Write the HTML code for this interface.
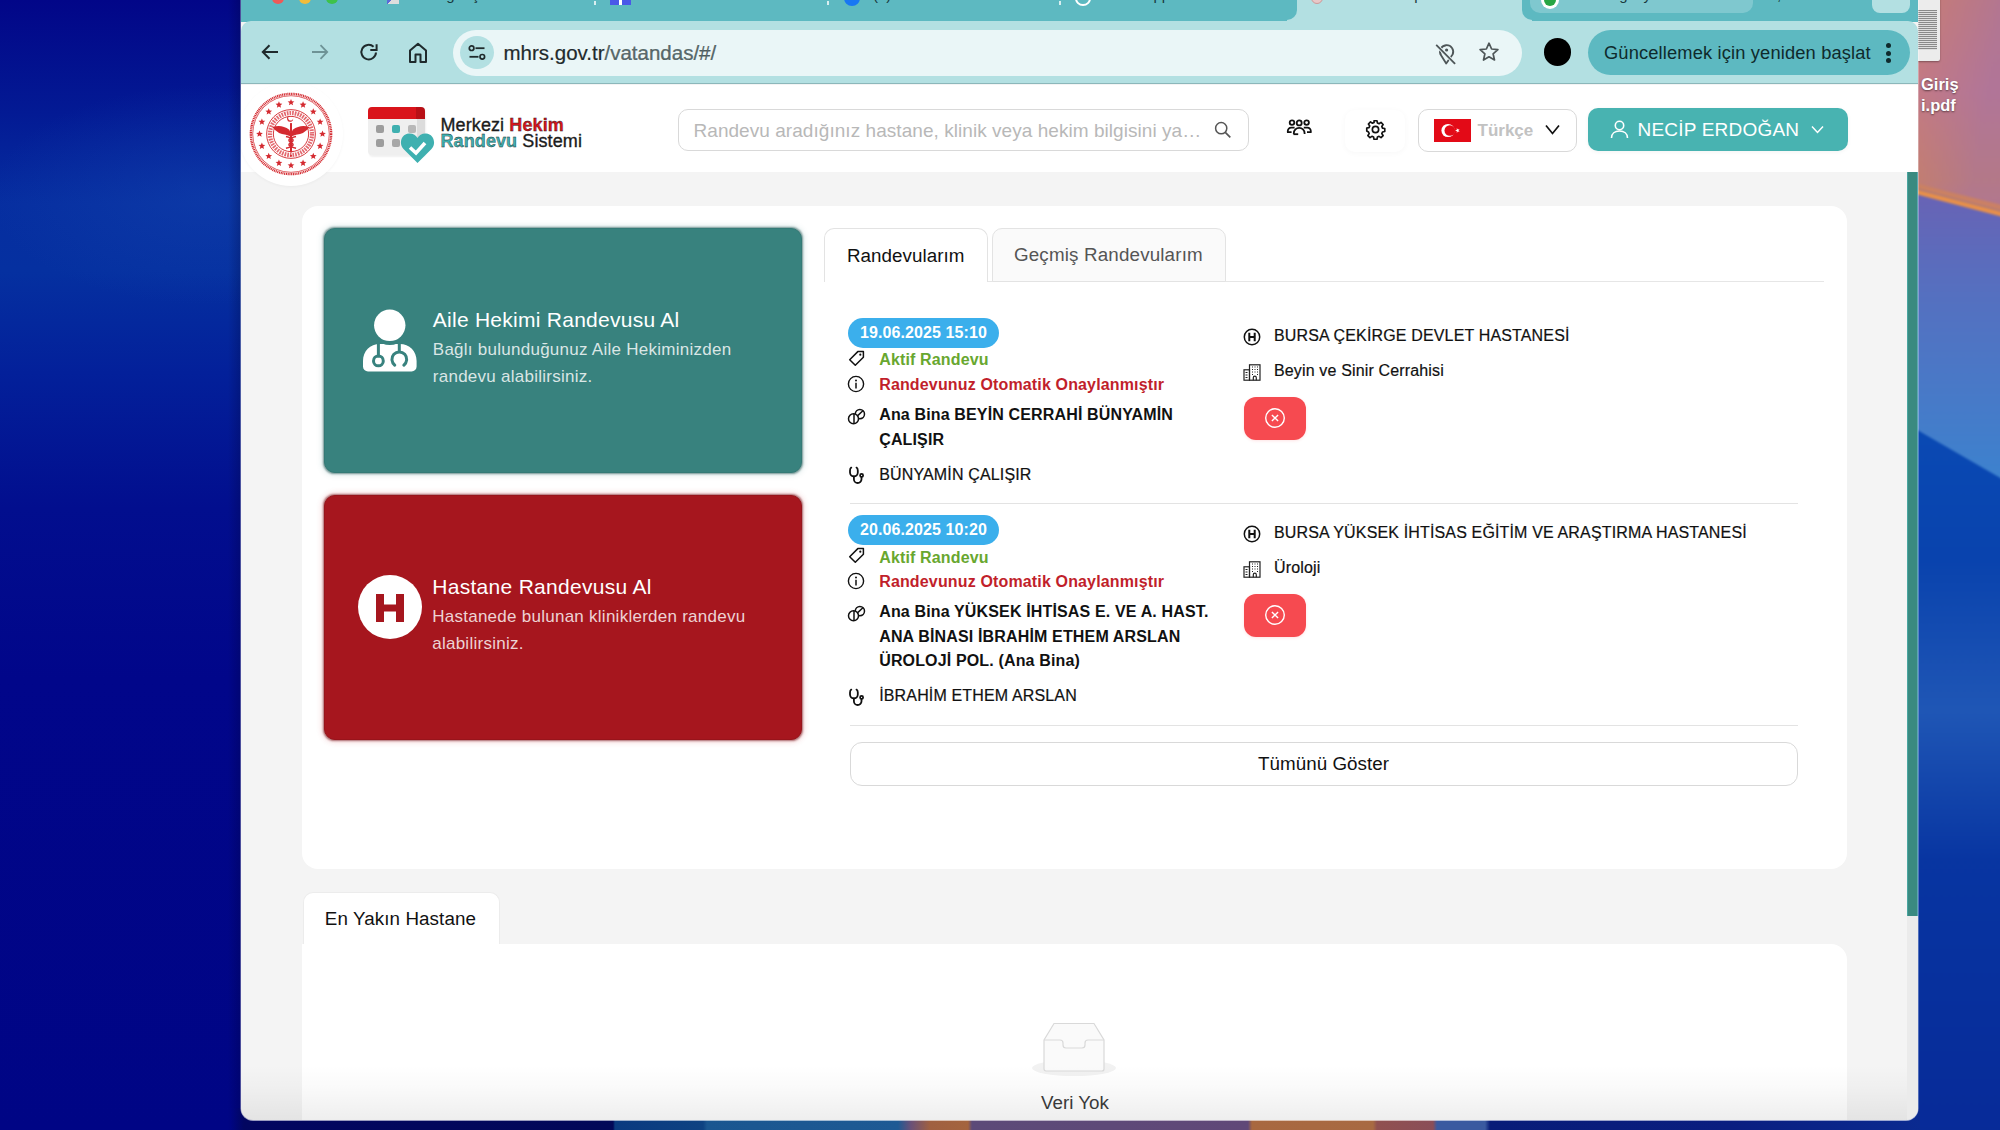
<!DOCTYPE html>
<html><head><meta charset="utf-8">
<style>
*{box-sizing:border-box;margin:0;padding:0}
html,body{width:2000px;height:1130px;overflow:hidden;font-family:"Liberation Sans",sans-serif;}
body{position:relative;background:#00008a;}
.abs{position:absolute}
#deskL{left:0;top:0;width:260px;height:1130px;background:radial-gradient(ellipse 220px 110px at 210px 195px,rgba(20,70,175,0.45),rgba(20,70,175,0) 100%),linear-gradient(180deg,#020688 0%,#031a94 10%,#062ea0 18%,#0530a0 24%,#03209a 33%,#020e8e 45%,#01068a 60%,#000585 100%);}
#deskR{left:1900px;top:0;width:100px;height:1130px;background:linear-gradient(170deg,#c97a73 0%,#c07888 12%,#d08050 17%,#7a62a8 21%,#5a68b4 35%,#1c44b0 42%,#0c3aa8 60%,#0a2c98 100%);}
#deskB{left:230px;top:1108px;width:1690px;height:22px;background:linear-gradient(90deg,#000585 0px,#020660 14px,#020858 383px,#0a3a80 385px,#0e4282 473px,#1a5690 477px,#1e5a94 668px,#6a5078 681px,#a06040 700px,#a4643e 738px,#5c4a78 742px,#604878 1018px,#a86840 1022px,#a86a42 1143px,#905050 1147px,#8a4e58 1203px,#3a5aa0 1207px,#3a5aa0 1255px,#081c78 1260px,#0a1e80 1500px,#0a2a90 1690px);}
#win{left:241px;top:0;width:1677px;height:1120px;border-radius:0 0 12px 12px;overflow:hidden;background:#f4f4f4;box-shadow:0 0.5px 0 0.5px rgba(255,255,255,0.6)}
#tabstrip{left:0;top:0;width:1677px;height:22px;background:#5db9c1;}
#toolbar{left:0;top:21px;width:1677px;height:63px;background:#b3e0e2;border-radius:10px 10px 0 0;border-bottom:1.5px solid #8cb7ba;}
#header{left:0;top:85px;width:1677px;height:87px;background:#fff;}
.card{background:#fff;border-radius:16px;}
.bigcard{border-radius:11px;border:1px solid;}
.tab{border:1px solid #e3e3e3;border-radius:10px 10px 0 0;}
.pill{height:30px;width:150.8px;border-radius:15px;background:#3bafec;color:#fff;font-weight:bold;font-size:16px;line-height:30px;padding-left:12px;letter-spacing:0.1px;white-space:nowrap}
.t16b{font-size:16px;font-weight:bold;white-space:nowrap;letter-spacing:0.15px}
.t16{font-size:16px;white-space:nowrap;letter-spacing:0.15px;-webkit-text-stroke:0.2px #111}
.cancel{width:62.3px;height:43px;border-radius:12px;background:#f64a50;box-shadow:0 1px 3px rgba(246,74,80,0.15)}
</style></head>
<body>
<div id="deskL" class="abs"></div><div class="abs" style="left:228px;top:0;width:14px;height:1130px;background:linear-gradient(90deg,rgba(0,0,40,0),rgba(0,0,40,0.25))"></div>
<svg id="deskR2" class="abs" style="left:1900px;top:-20px;filter:blur(1px)" width="130" height="1170" viewBox="0 -20 130 1170">
  <defs>
    <linearGradient id="gTop" x1="0" y1="0" x2="0" y2="1"><stop offset="0" stop-color="#c77c74"/><stop offset="0.45" stop-color="#c47a84"/><stop offset="0.8" stop-color="#c88068"/><stop offset="1" stop-color="#c07a80"/></linearGradient>
    <linearGradient id="gMid" x1="0" y1="0" x2="0" y2="1"><stop offset="0" stop-color="#6a62b4"/><stop offset="0.35" stop-color="#5570c0"/><stop offset="1" stop-color="#3a84d0"/></linearGradient>
    <linearGradient id="gLow" x1="0" y1="0" x2="0" y2="1"><stop offset="0" stop-color="#0a4ab4"/><stop offset="0.5" stop-color="#0838a4"/><stop offset="1" stop-color="#072a98"/></linearGradient>
  </defs>
  <rect x="0" y="-20" width="130" height="250" fill="url(#gTop)"/>
  <polygon points="0,184 130,218 130,500 0,420" fill="url(#gMid)"/>
  <polygon points="0,185 130,219 130,224 0,190" fill="#e8904a"/>
  <polygon points="0,178 130,212 130,220 0,186" fill="#d08458" opacity="0.5"/>
  <polygon points="0,420 130,495 130,1150 0,1150" fill="url(#gLow)"/>
  <linearGradient id="gH" x1="0" y1="0" x2="1" y2="0.3"><stop offset="0.2" stop-color="#9a70b0" stop-opacity="0"/><stop offset="0.75" stop-color="#9a70b0" stop-opacity="0.45"/></linearGradient>
  <polygon points="0,-20 130,-20 130,212 0,180" fill="url(#gH)"/>
  <linearGradient id="gV2" x1="0" y1="0" x2="0" y2="1"><stop offset="0" stop-color="#4a88d0" stop-opacity="0"/><stop offset="0.5" stop-color="#4a88d0" stop-opacity="0.35"/><stop offset="1" stop-color="#4a88d0" stop-opacity="0"/></linearGradient>
  <rect x="0" y="560" width="130" height="300" fill="url(#gV2)"/>
</svg>
<div id="deskB" class="abs"></div>
<!-- desktop file icon -->
<div class="abs" style="left:1914px;top:-4px;width:25.5px;height:64.5px;background:#ececec;border-radius:2px;box-shadow:0 1px 2px rgba(0,0,0,0.35)"><div style="margin:14px 3px 0 3px;height:40px;background:repeating-linear-gradient(180deg,#8a8a8a 0 1px,#dedede 1px 2px)"></div></div>
<div class="abs" style="left:1921px;top:74px;font-size:16.5px;font-weight:bold;color:#fff;line-height:21px;text-shadow:0 1px 2px rgba(0,0,0,0.5);white-space:nowrap">Giriş<br>i.pdf</div>
<div id="win" class="abs">
  <div id="tabstrip" class="abs"></div>
  <!-- tab strip items (cut off) -->
  <div class="abs" style="left:31px;top:-8px;width:12px;height:12px;border-radius:50%;background:#ee5a58"></div>
  <div class="abs" style="left:58px;top:-8px;width:12px;height:12px;border-radius:50%;background:#f2bc3a"></div>
  <div class="abs" style="left:85px;top:-8px;width:12px;height:12px;border-radius:50%;background:#3ec24a"></div>
  <div class="abs" style="left:146px;top:-6px;width:12px;height:10px;background:linear-gradient(135deg,#5a6ad8 50%,#ddd 50%)"></div>
  <div class="abs" style="left:197px;top:-14px;font-size:15px;color:#1a3a3e">ogle Ş</div>
  <div class="abs" style="left:353px;top:1px;width:2px;height:4px;background:#d8eef0"></div>
  <div class="abs" style="left:369px;top:-8px;width:21px;height:13px;background:#4a58e8"><div style="position:absolute;left:9px;top:0;width:3px;height:13px;background:#fff"></div></div>
  <div class="abs" style="left:586px;top:1px;width:2px;height:4px;background:#d8eef0"></div>
  <div class="abs" style="left:603px;top:-10px;width:16px;height:16px;border-radius:50%;background:#1877f2"></div>
  <div class="abs" style="left:632px;top:-14px;font-size:15px;color:#1a3a3e">(7)</div>
  <div class="abs" style="left:818px;top:1px;width:2px;height:4px;background:#d8eef0"></div>
  <div class="abs" style="left:834px;top:-9px;width:16px;height:15px;border-radius:50%;border:2.5px solid #fff"></div>
  <div class="abs" style="left:860px;top:-14px;font-size:15px;color:#1a3a3e">WhatsApp</div>
  <!-- active tab -->
  <div class="abs" style="left:1056px;top:0;width:225px;height:22px;background:#b3e0e2"></div>
  <div class="abs" style="left:1046px;top:0;width:10px;height:22px;background:#b3e0e2"><div style="width:10px;height:20px;background:#5db9c1;border-radius:0 0 10px 0"></div></div>
  <div class="abs" style="left:1281px;top:0;width:10px;height:22px;background:#b3e0e2"><div style="width:10px;height:20px;background:#5db9c1;border-radius:0 0 0 10px"></div></div>
  <div class="abs" style="left:1070px;top:-8px;width:12px;height:12px;border-radius:50%;background:#e8c8c8;border:1px solid #c99"></div>
  <div class="abs" style="left:1170px;top:-14px;font-size:15px;color:#1a3a3e">ip</div>
  <!-- tab group -->
  <div class="abs" style="left:1289px;top:0;width:223px;height:13px;background:#7fc8cf;border-radius:0 0 10px 10px"></div>
  <div class="abs" style="left:1300px;top:-9px;width:18px;height:18px;border-radius:50%;background:#fff"><div style="position:absolute;left:3px;top:3px;width:12px;height:12px;border-radius:50%;background:#27a544"></div></div>
  <div class="abs" style="left:1370px;top:-14px;font-size:15px;color:#1a3a3e">ogle  y</div>
  <div class="abs" style="left:1536px;top:-14px;font-size:15px;color:#1a3a3e">,</div>
  <div class="abs" style="left:1631px;top:0;width:38px;height:13px;background:#b3e0e2;border-radius:0 0 8px 8px"></div>
  <div id="toolbar" class="abs"></div>
  <!-- toolbar icons -->
  <svg class="abs" style="left:19px;top:42px" width="20" height="20" viewBox="0 0 20 20"><path d="M18 10H3M9.5 3.2L2.8 10l6.7 6.8" fill="none" stroke="#1f2a2c" stroke-width="2"/></svg>
  <svg class="abs" style="left:69px;top:42px" width="20" height="20" viewBox="0 0 20 20"><path d="M2 10h15M10.5 3.2L17.2 10l-6.7 6.8" fill="none" stroke="#6e9396" stroke-width="1.8"/></svg>
  <svg class="abs" style="left:118px;top:42px" width="20" height="20" viewBox="0 0 20 20"><path d="M16.99 10.48A7.3 7.3 0 1 1 14.58 4.68" fill="none" stroke="#1f2a2c" stroke-width="2"/><path d="M11.3 8.1H17.6V2.2" fill="none" stroke="#1f2a2c" stroke-width="2"/></svg>
  <svg class="abs" style="left:167px;top:42px" width="20" height="22" viewBox="0 0 20 22"><path d="M2 20V8.6L10 1.8l8 6.8V20h-5.5v-7.5h-5V20z" fill="none" stroke="#1f2a2c" stroke-width="2" stroke-linejoin="round"/></svg>
  <!-- address bar -->
  <div class="abs" style="left:212px;top:29.5px;width:1069px;height:46px;border-radius:23px;background:#eaf6f7"></div>
  <div class="abs" style="left:219px;top:36px;width:34px;height:33px;border-radius:50%;background:#b3e0e2"></div>
  <svg class="abs" style="left:226px;top:43px" width="20" height="20" viewBox="0 0 20 20"><circle cx="4.6" cy="5.2" r="2.3" fill="none" stroke="#1f2a2c" stroke-width="1.7"/><path d="M8.5 5.2h9" stroke="#1f2a2c" stroke-width="1.8"/><circle cx="15.3" cy="13.8" r="2.3" fill="none" stroke="#1f2a2c" stroke-width="1.7"/><path d="M2.5 13.8h9" stroke="#1f2a2c" stroke-width="1.8"/></svg>
  <div class="abs" style="left:262.5px;top:41px;font-size:20.5px;color:#1f2a2c;letter-spacing:0px;white-space:nowrap;-webkit-text-stroke:0.2px #1f2a2c">mhrs.gov.tr<span style="color:#5a6c6e">/vatandas/#/</span></div>
  <!-- eye-off/location icon -->
  <svg class="abs" style="left:1193px;top:41px" width="24" height="24" viewBox="0 0 24 24"><path d="M7.2 14.6A6.6 6.6 0 1 1 18.6 13.6L12.2 22.6L7.2 14.6" fill="none" stroke="#4e5658" stroke-width="1.8" stroke-linejoin="round"/><circle cx="12.6" cy="9" r="1.6" fill="#4e5658"/><path d="M2.2 3.9L21.1 22.8" stroke="#eaf6f7" stroke-width="3.5"/><path d="M2.2 3.9L21.1 22.8" stroke="#4e5658" stroke-width="1.8"/></svg>
  <svg class="abs" style="left:1237px;top:41px" width="22" height="22" viewBox="0 0 22 22"><path d="M11 2.2l2.6 5.8 6.3.6-4.8 4.2 1.4 6.2L11 15.8 5.5 19l1.4-6.2-4.8-4.2 6.3-.6z" fill="none" stroke="#4e5658" stroke-width="1.7" stroke-linejoin="round"/></svg>
  <!-- profile dot -->
  <div class="abs" style="left:1302.5px;top:38px;width:27.5px;height:27.5px;border-radius:50%;background:#000"></div>
  <!-- update pill -->
  <div class="abs" style="left:1347px;top:29.5px;width:322px;height:45.5px;border-radius:23px;background:#5db9c1"></div>
  <div class="abs" style="left:1363px;top:42px;font-size:18.3px;color:#0f2a2c;white-space:nowrap;letter-spacing:0.15px">Güncellemek için yeniden başlat</div>
  <div class="abs" style="left:1645px;top:43px;width:5px;height:5px;border-radius:50%;background:#0f2a2c"></div>
  <div class="abs" style="left:1645px;top:50.5px;width:5px;height:5px;border-radius:50%;background:#0f2a2c"></div>
  <div class="abs" style="left:1645px;top:58px;width:5px;height:5px;border-radius:50%;background:#0f2a2c"></div>
  <div id="header" class="abs"></div>
  <!-- ministry logo -->
  <div class="abs" style="left:-10px;top:85px;width:130px;height:110px;overflow:hidden"><div class="abs" style="left:8px;top:-3px;width:104px;height:104px;border-radius:50%;background:#fff;box-shadow:0 1px 3px rgba(0,0,0,0.04)"></div></div>
  <svg class="abs" style="left:8px;top:92px" width="84" height="84" viewBox="0 0 100 100">
    <circle cx="50" cy="50" r="47.8" fill="#fff" stroke="#d42a30" stroke-width="2.8" stroke-dasharray="1.3 0.8"/>
    <circle cx="50" cy="50" r="45.6" fill="none" stroke="#d42a30" stroke-width="0.9"/>
    <g fill="#d42a30"><polygon points="50.00,8.30 51.11,10.97 53.99,11.20 51.80,13.08 52.47,15.90 50.00,14.39 47.53,15.90 48.20,13.08 46.01,11.20 48.89,10.97"/><polygon points="64.35,11.15 65.46,13.83 68.35,14.06 66.15,15.94 66.82,18.75 64.35,17.24 61.88,18.75 62.55,15.94 60.36,14.06 63.24,13.83"/><polygon points="76.52,19.28 77.63,21.95 80.51,22.19 78.31,24.07 78.99,26.88 76.52,25.37 74.05,26.88 74.72,24.07 72.52,22.19 75.41,21.95"/><polygon points="84.65,31.45 85.76,34.12 88.64,34.35 86.44,36.23 87.11,39.05 84.65,37.54 82.18,39.05 82.85,36.23 80.65,34.35 83.53,34.12"/><polygon points="87.50,45.80 88.61,48.47 91.49,48.70 89.30,50.58 89.97,53.40 87.50,51.89 85.03,53.40 85.70,50.58 83.51,48.70 86.39,48.47"/><polygon points="84.65,60.15 85.76,62.82 88.64,63.05 86.44,64.93 87.11,67.75 84.65,66.24 82.18,67.75 82.85,64.93 80.65,63.05 83.53,62.82"/><polygon points="76.52,72.32 77.63,74.99 80.51,75.22 78.31,77.10 78.99,79.91 76.52,78.41 74.05,79.91 74.72,77.10 72.52,75.22 75.41,74.99"/><polygon points="64.35,80.45 65.46,83.12 68.35,83.35 66.15,85.23 66.82,88.04 64.35,86.54 61.88,88.04 62.55,85.23 60.36,83.35 63.24,83.12"/><polygon points="50.00,83.30 51.11,85.97 53.99,86.20 51.80,88.08 52.47,90.90 50.00,89.39 47.53,90.90 48.20,88.08 46.01,86.20 48.89,85.97"/><polygon points="35.65,80.45 36.76,83.12 39.64,83.35 37.45,85.23 38.12,88.04 35.65,86.54 33.18,88.04 33.85,85.23 31.65,83.35 34.54,83.12"/><polygon points="23.48,72.32 24.59,74.99 27.48,75.22 25.28,77.10 25.95,79.91 23.48,78.41 21.01,79.91 21.69,77.10 19.49,75.22 22.37,74.99"/><polygon points="15.35,60.15 16.47,62.82 19.35,63.05 17.15,64.93 17.82,67.75 15.35,66.24 12.89,67.75 13.56,64.93 11.36,63.05 14.24,62.82"/><polygon points="12.50,45.80 13.61,48.47 16.49,48.70 14.30,50.58 14.97,53.40 12.50,51.89 10.03,53.40 10.70,50.58 8.51,48.70 11.39,48.47"/><polygon points="15.35,31.45 16.47,34.12 19.35,34.35 17.15,36.23 17.82,39.05 15.35,37.54 12.89,39.05 13.56,36.23 11.36,34.35 14.24,34.12"/><polygon points="23.48,19.28 24.59,21.95 27.48,22.19 25.28,24.07 25.95,26.88 23.48,25.37 21.01,26.88 21.69,24.07 19.49,22.19 22.37,21.95"/><polygon points="35.65,11.15 36.76,13.83 39.64,14.06 37.45,15.94 38.12,18.75 35.65,17.24 33.18,18.75 33.85,15.94 31.65,14.06 34.54,13.83"/></g>
    <circle cx="50" cy="50" r="29" fill="none" stroke="#d42a30" stroke-width="1.1"/>
    <circle cx="50" cy="50" r="25" fill="none" stroke="#e36a70" stroke-width="5" stroke-dasharray="2 1.2"/>
    <circle cx="50" cy="50" r="21" fill="none" stroke="#d42a30" stroke-width="1.1"/>
    <path d="M52.5 31.5a3.6 3.6 0 1 1-4.2-3.2a3 3 0 1 0 4.2 3.2z" fill="#d42a30"/>
    <path d="M28 42 Q38 38 48 45 L50 50 L52 45 Q62 38 72 42 Q66 50 56 51 L50 53 L44 51 Q34 50 28 42z" fill="#d42a30"/>
    <path d="M50 37 L50 72" stroke="#d42a30" stroke-width="2.4"/>
    <path d="M44 53 Q57 56 50 60 Q43 64 56 67 M56 53 Q43 56 50 60 Q57 64 44 67" stroke="#d42a30" stroke-width="1.8" fill="none"/>
    <circle cx="50" cy="76" r="1.2" fill="#d42a30"/>
  </svg>
  <!-- MHRS logo -->
  <div class="abs" style="left:126.5px;top:107px;width:57.5px;height:48px;border-radius:4px;background:#efefef;box-shadow:1px 2px 2px rgba(0,0,0,0.06)"></div>
  <div class="abs" style="left:126.5px;top:107px;width:57.5px;height:12px;border-radius:4px 4px 0 0;background:linear-gradient(90deg,#d9141b 85%,#b81016 85%)"></div>
  <div class="abs" style="left:176px;top:119px;width:8px;height:20px;background:#dcdcdc"></div>
  <div class="abs" style="left:135px;top:125px;width:8px;height:8px;border-radius:2px;background:#9d9d9d"></div>
  <div class="abs" style="left:151px;top:125px;width:8px;height:8px;border-radius:2px;background:#3fb0b0"></div>
  <div class="abs" style="left:167px;top:125px;width:8px;height:8px;border-radius:2px;background:#b8b8b8"></div>
  <div class="abs" style="left:135px;top:139px;width:8px;height:8px;border-radius:2px;background:#9d9d9d"></div>
  <div class="abs" style="left:151px;top:139px;width:8px;height:8px;border-radius:2px;background:#a8a8a8"></div>
  <svg class="abs" style="left:159px;top:131px" width="35" height="33" viewBox="0 0 35 33"><path d="M17.5 32 L3.5 18 C-1.5 13 1 3 9 2.5 C13 2.3 16 4.5 17.5 7 C19 4.5 22 2.3 26 2.5 C34 3 36.5 13 31.5 18z" fill="#3fb0b0"/><path d="M10 16.5l6 5.5 9-10" fill="none" stroke="#fff" stroke-width="3.6"/></svg>
  <div class="abs" style="left:199.5px;top:115px;font-size:18px;line-height:20px;color:#1c1c1c;white-space:nowrap;letter-spacing:0.1px;-webkit-text-stroke:0.35px #1c1c1c">Merkezi <b style="color:#d9141b">Hekim</b></div>
  <div class="abs" style="left:199.5px;top:130.5px;font-size:18px;line-height:20px;color:#1c1c1c;white-space:nowrap;letter-spacing:0.1px;-webkit-text-stroke:0.35px #1c1c1c"><b style="color:#3fb0b0">Randevu</b> Sistemi</div>
  <!-- search -->
  <div class="abs" style="left:436.5px;top:108.5px;width:571px;height:42.5px;border-radius:10px;border:1px solid #d9d9d9;background:#fff"></div>
  <div class="abs" style="left:452.5px;top:119.7px;font-size:19px;color:#b8b8b8;white-space:nowrap;letter-spacing:0.05px">Randevu aradığınız hastane, klinik veya hekim bilgisini ya…</div>
  <svg class="abs" style="left:973px;top:121px" width="18" height="18" viewBox="0 0 18 18"><circle cx="7.2" cy="7.2" r="5.6" fill="none" stroke="#555" stroke-width="1.5"/><path d="M11.3 11.3l5 5" stroke="#555" stroke-width="1.7"/></svg>
  <!-- group icon -->
  <svg class="abs" style="left:1045px;top:118px" width="27" height="18" viewBox="0 0 27 18"><g fill="none" stroke="#111" stroke-width="1.8" stroke-linejoin="round"><circle cx="6" cy="4.6" r="2.3"/><circle cx="13.2" cy="4.9" r="2.5"/><circle cx="20.6" cy="4.6" r="2.3"/><path d="M8.6 9.6H5.2A3.4 3.4 0 0 0 1.8 13V14.2H5.6"/><path d="M17.8 9.6H21.4A3.4 3.4 0 0 1 24.8 13V14.2H21"/><path d="M7.8 16V15.2A5.4 5.4 0 0 1 18.6 15.2V16" /><path d="M7.4 16.2H12.2"/></g></svg>
  <!-- gear -->
  <div class="abs" style="left:1104px;top:110px;width:60px;height:42px;border-radius:10px;box-shadow:0 1px 6px rgba(0,0,0,0.035)"></div>
  <svg class="abs" style="left:1124px;top:119px" width="21" height="21" viewBox="0 0 24 24"><path d="M10.3 2h3.4l.5 2.6 1.9.8 2.2-1.5 2.4 2.4-1.5 2.2.8 1.9 2.6.5v3.4l-2.6.5-.8 1.9 1.5 2.2-2.4 2.4-2.2-1.5-1.9.8-.5 2.6h-3.4l-.5-2.6-1.9-.8-2.2 1.5-2.4-2.4 1.5-2.2-.8-1.9L2 13.7v-3.4l2.6-.5.8-1.9-1.5-2.2 2.4-2.4 2.2 1.5 1.9-.8z" fill="none" stroke="#111" stroke-width="1.9" stroke-linejoin="round"/><circle cx="12" cy="12" r="3.6" fill="none" stroke="#111" stroke-width="1.9"/></svg>
  <!-- language -->
  <div class="abs" style="left:1177px;top:108.5px;width:159px;height:43px;border-radius:10px;border:1px solid #d9d9d9;background:#fff"></div>
  <svg class="abs" style="left:1193px;top:118.5px" width="37" height="23" viewBox="0 0 37 23"><rect width="37" height="23" fill="#e30a17"/><circle cx="14" cy="11.5" r="6.6" fill="#fff"/><circle cx="15.8" cy="11.5" r="5.3" fill="#e30a17"/><path d="M21 11.5l4.6-1.5-2.8 3.9v-4.8l2.8 3.9z" fill="#fff"/></svg>
  <div class="abs" style="left:1236.5px;top:120.5px;font-size:17px;font-weight:bold;color:#c2c2c2;white-space:nowrap">Türkçe</div>
  <svg class="abs" style="left:1304px;top:124px" width="15" height="11" viewBox="0 0 15 11"><path d="M1 1.5l6.5 8 6.5-8" fill="none" stroke="#111" stroke-width="1.7"/></svg>
  <!-- user -->
  <div class="abs" style="left:1347px;top:108px;width:259.5px;height:43px;border-radius:10px;background:#48b3b1;box-shadow:0 1px 4px rgba(0,0,0,0.05)"></div>
  <svg class="abs" style="left:1369px;top:120px" width="19" height="19" viewBox="0 0 19 19"><circle cx="9.5" cy="5.5" r="4.2" fill="none" stroke="#fff" stroke-width="1.6"/><path d="M1.5 18c0-4.5 3.5-7 8-7s8 2.5 8 7" fill="none" stroke="#fff" stroke-width="1.6"/></svg>
  <div class="abs" style="left:1396.5px;top:119px;font-size:19px;color:#fff;white-space:nowrap;letter-spacing:0.2px">NECİP ERDOĞAN</div>
  <svg class="abs" style="left:1570px;top:125px" width="13" height="9" viewBox="0 0 13 9"><path d="M1 1.5l5.5 6 5.5-6" fill="none" stroke="#fff" stroke-width="1.5"/></svg>
  <!-- main card -->
  <div class="abs card" style="left:61px;top:205.5px;width:1545.4px;height:663px;"></div>
  <!-- teal card -->
  <div class="abs bigcard" style="left:82.5px;top:228px;width:478.5px;height:244.5px;background:#38827e;border-color:#347a76;box-shadow:0 0 2px 0.5px rgba(30,80,78,0.55),0 0 6px 1px rgba(60,130,130,0.25)"></div>
  <svg class="abs" style="left:122px;top:309px" width="55" height="64" viewBox="0 0 55 64"><path d="M5 62.5a5 5 0 0 1-5-5V52C0 42 7 35 17 34.9h19.6C46.6 35 53.6 42 53.6 52v5.5a5 5 0 0 1-5 5z" fill="#fff"/><circle cx="26.75" cy="16.3" r="19.8" fill="#38827e"/><circle cx="26.75" cy="16.3" r="15.7" fill="#fff"/><g fill="none" stroke="#38827e" stroke-width="3" stroke-linecap="round"><path d="M15.4 34v13"/><circle cx="15.4" cy="51.9" r="4.9"/><path d="M36.3 34v7.8"/><path d="M31.8 56.2a7.4 7.4 0 1 1 9 0"/></g></svg>
  <div class="abs" style="left:191.8px;top:307.5px;font-size:21px;color:#fff;white-space:nowrap;letter-spacing:0.26px">Aile Hekimi Randevusu Al</div>
  <div class="abs" style="left:191.8px;top:336px;font-size:17px;line-height:27px;color:rgba(255,255,255,0.82);white-space:nowrap;letter-spacing:0.26px">Bağlı bulunduğunuz Aile Hekiminizden<br>randevu alabilirsiniz.</div>
  <!-- red card -->
  <div class="abs bigcard" style="left:83.4px;top:495.2px;width:477.6px;height:244.8px;background:#a6161e;border-color:#98141b;box-shadow:0 0 2px 0.5px rgba(110,15,20,0.55),0 0 6px 1px rgba(210,60,70,0.3)"></div>
  <div class="abs" style="left:116.7px;top:575px;width:64px;height:64px;border-radius:50%;background:#fff"></div>
  <div class="abs" style="left:135px;top:594px;width:28px;height:28px;background:#a6161e;clip-path:polygon(0 0,8px 0,8px 10.5px,20px 10.5px,20px 0,28px 0,28px 28px,20px 28px,20px 17.5px,8px 17.5px,8px 28px,0 28px)"></div>
  <div class="abs" style="left:191.2px;top:574.5px;font-size:21px;color:#fff;white-space:nowrap;letter-spacing:0.3px">Hastane Randevusu Al</div>
  <div class="abs" style="left:191.2px;top:603px;font-size:17px;line-height:27px;color:rgba(255,255,255,0.82);white-space:nowrap;letter-spacing:0.26px">Hastanede bulunan kliniklerden randevu<br>alabilirsiniz.</div>
  <!-- tabs -->
  <div class="abs" style="left:583px;top:281px;width:1000px;height:1px;background:#e6e6e6"></div>
  <div class="abs tab" style="left:583.3px;top:228.4px;width:164.2px;height:54px;background:#fff;border-bottom:none"></div>
  <div class="abs" style="left:606px;top:245px;font-size:18.8px;color:#111;white-space:nowrap;letter-spacing:0.05px">Randevularım</div>
  <div class="abs tab" style="left:751px;top:228.4px;width:233.5px;height:53.5px;background:#fafafa"></div>
  <div class="abs" style="left:773px;top:244px;font-size:18.8px;color:#555;white-space:nowrap;letter-spacing:0.16px">Geçmiş Randevularım</div>
  <div class="abs pill" style="left:607px;top:317.6px">19.06.2025 15:10</div>
  <svg class="abs" style="left:607px;top:350px" width="17" height="17" viewBox="0 0 17 17"><path d="M9.8 1.6h5.6v5.6L7.3 15.3 1.7 9.7z" fill="none" stroke="#111" stroke-width="1.5" stroke-linejoin="round"/><circle cx="12.3" cy="4.7" r="1.1" fill="#111"/></svg>
  <div class="abs t16b" style="left:638.2px;top:351.2px;color:#68a72f">Aktif Randevu</div>
  <svg class="abs" style="left:606px;top:374.6px" width="18" height="18" viewBox="0 0 18 18"><circle cx="9" cy="9" r="7.6" fill="none" stroke="#111" stroke-width="1.4"/><circle cx="9" cy="5.4" r="1" fill="#111"/><path d="M9 7.8v5.6" stroke="#111" stroke-width="1.5"/></svg>
  <div class="abs t16b" style="left:638.2px;top:375.6px;color:#c11f2b">Randevunuz Otomatik Onaylanmıştır</div>
  <svg class="abs" style="left:606px;top:407.5px" width="20" height="18" viewBox="0 0 20 18"><g fill="#fff" stroke="#111" stroke-width="1.5"><circle cx="12.9" cy="6.1" r="4.6"/><path d="M9.9 8.4L15.9 2.8" fill="none"/><circle cx="6.5" cy="10.7" r="5"/><path d="M7 5.8v9.8" fill="none"/></g></svg>
  <div class="abs t16b" style="left:638.2px;top:406.0px;color:#111">Ana Bina BEYİN CERRAHİ BÜNYAMİN</div>
  <div class="abs t16b" style="left:638.2px;top:430.5px;color:#111">ÇALIŞIR</div>
  <svg class="abs" style="left:606px;top:464px" width="18" height="20" viewBox="0 0 18 20"><g fill="none" stroke="#111" stroke-width="1.8" stroke-linecap="round"><path d="M4.3 3.6Q3 4.5 3 6.5V8.5A3.9 3.9 0 0 0 10.8 8.5V6.5Q10.8 4.5 9.5 3.6"/><path d="M6.9 12.4V15.2A3.8 3.8 0 0 0 14.5 15.2V13"/><circle cx="14.6" cy="11.4" r="1.5"/></g></svg>
  <div class="abs t16" style="left:638.2px;top:465.5px;color:#111">BÜNYAMİN ÇALIŞIR</div>
  <svg class="abs" style="left:1001.5px;top:327.5px" width="18" height="18" viewBox="0 0 18 18"><circle cx="9" cy="9" r="7.7" fill="none" stroke="#111" stroke-width="1.5"/><path d="M6.3 4.8v8.4M11.7 4.8v8.4M6.3 9h5.4" stroke="#111" stroke-width="2"/></svg>
  <div class="abs t16" style="left:1033px;top:326.7px;color:#111">BURSA ÇEKİRGE DEVLET HASTANESİ</div>
  <svg class="abs" style="left:1001.5px;top:363.5px" width="18" height="17" viewBox="0 0 18 17"><g fill="none" stroke="#222" stroke-width="1.2"><rect x="6.5" y="0.8" width="10.5" height="15.4"/><rect x="1" y="5.8" width="5.5" height="10.4"/><path d="M9 3h1M11.5 3h1M14 3h1M9 5.5h1M11.5 5.5h1M14 5.5h1M9 8h1M11.5 8h1M14 8h1M9 10.5h1M14 10.5h1M2.5 8.5h2M2.5 11h2M2.5 13.5h2"/><path d="M10.3 16.2v-2.5a1.5 1.5 0 0 1 3 0v2.5"/></g></svg>
  <div class="abs t16" style="left:1033px;top:362px;color:#111">Beyin ve Sinir Cerrahisi</div>
  <div class="abs cancel" style="left:1002.7px;top:397px"><svg width="62" height="43" viewBox="0 0 62 43"><circle cx="31" cy="21" r="9.3" fill="none" stroke="#fff" stroke-width="1.4"/><path d="M27.9 17.9l6.2 6.2M34.1 17.9l-6.2 6.2" stroke="#fff" stroke-width="1.4"/></svg></div>
  <div class="abs" style="left:609px;top:502.5px;width:948px;height:1px;background:#e3e3e3"></div>
  <div class="abs pill" style="left:607px;top:515.0px">20.06.2025 10:20</div>
  <svg class="abs" style="left:607px;top:547.4px" width="17" height="17" viewBox="0 0 17 17"><path d="M9.8 1.6h5.6v5.6L7.3 15.3 1.7 9.7z" fill="none" stroke="#111" stroke-width="1.5" stroke-linejoin="round"/><circle cx="12.3" cy="4.7" r="1.1" fill="#111"/></svg>
  <div class="abs t16b" style="left:638.2px;top:548.6px;color:#68a72f">Aktif Randevu</div>
  <svg class="abs" style="left:606px;top:572.0px" width="18" height="18" viewBox="0 0 18 18"><circle cx="9" cy="9" r="7.6" fill="none" stroke="#111" stroke-width="1.4"/><circle cx="9" cy="5.4" r="1" fill="#111"/><path d="M9 7.8v5.6" stroke="#111" stroke-width="1.5"/></svg>
  <div class="abs t16b" style="left:638.2px;top:573.0px;color:#c11f2b">Randevunuz Otomatik Onaylanmıştır</div>
  <svg class="abs" style="left:606px;top:604.9px" width="20" height="18" viewBox="0 0 20 18"><g fill="#fff" stroke="#111" stroke-width="1.5"><circle cx="12.9" cy="6.1" r="4.6"/><path d="M9.9 8.4L15.9 2.8" fill="none"/><circle cx="6.5" cy="10.7" r="5"/><path d="M7 5.8v9.8" fill="none"/></g></svg>
  <div class="abs t16b" style="left:638.2px;top:603.4px;color:#111">Ana Bina YÜKSEK İHTİSAS E. VE A. HAST.</div>
  <div class="abs t16b" style="left:638.2px;top:627.9px;color:#111">ANA BİNASI İBRAHİM ETHEM ARSLAN</div>
  <div class="abs t16b" style="left:638.2px;top:652.4px;color:#111">ÜROLOJİ POL. (Ana Bina)</div>
  <svg class="abs" style="left:606px;top:685.9px" width="18" height="20" viewBox="0 0 18 20"><g fill="none" stroke="#111" stroke-width="1.8" stroke-linecap="round"><path d="M4.3 3.6Q3 4.5 3 6.5V8.5A3.9 3.9 0 0 0 10.8 8.5V6.5Q10.8 4.5 9.5 3.6"/><path d="M6.9 12.4V15.2A3.8 3.8 0 0 0 14.5 15.2V13"/><circle cx="14.6" cy="11.4" r="1.5"/></g></svg>
  <div class="abs t16" style="left:638.2px;top:687.4px;color:#111">İBRAHİM ETHEM ARSLAN</div>
  <svg class="abs" style="left:1001.5px;top:524.9px" width="18" height="18" viewBox="0 0 18 18"><circle cx="9" cy="9" r="7.7" fill="none" stroke="#111" stroke-width="1.5"/><path d="M6.3 4.8v8.4M11.7 4.8v8.4M6.3 9h5.4" stroke="#111" stroke-width="2"/></svg>
  <div class="abs t16" style="left:1033px;top:524.1px;color:#111">BURSA YÜKSEK İHTİSAS EĞİTİM VE ARAŞTIRMA HASTANESİ</div>
  <svg class="abs" style="left:1001.5px;top:560.9px" width="18" height="17" viewBox="0 0 18 17"><g fill="none" stroke="#222" stroke-width="1.2"><rect x="6.5" y="0.8" width="10.5" height="15.4"/><rect x="1" y="5.8" width="5.5" height="10.4"/><path d="M9 3h1M11.5 3h1M14 3h1M9 5.5h1M11.5 5.5h1M14 5.5h1M9 8h1M11.5 8h1M14 8h1M9 10.5h1M14 10.5h1M2.5 8.5h2M2.5 11h2M2.5 13.5h2"/><path d="M10.3 16.2v-2.5a1.5 1.5 0 0 1 3 0v2.5"/></g></svg>
  <div class="abs t16" style="left:1033px;top:559.4px;color:#111">Üroloji</div>
  <div class="abs cancel" style="left:1002.7px;top:594.4px"><svg width="62" height="43" viewBox="0 0 62 43"><circle cx="31" cy="21" r="9.3" fill="none" stroke="#fff" stroke-width="1.4"/><path d="M27.9 17.9l6.2 6.2M34.1 17.9l-6.2 6.2" stroke="#fff" stroke-width="1.4"/></svg></div>
  <div class="abs" style="left:609px;top:724.5px;width:948px;height:1px;background:#e3e3e3"></div>
  <div class="abs" style="left:608.5px;top:742px;width:948.5px;height:43.5px;border:1px solid #d9d9d9;border-radius:12px;background:#fff"></div>
  <div class="abs" style="left:1017px;top:753px;font-size:18.8px;letter-spacing:0.05px;color:#111;white-space:nowrap">Tümünü Göster</div>
  <!-- bottom section -->
  <div class="abs tab" style="left:62px;top:891.5px;width:196.5px;height:53px;background:#fff;border-bottom:none;border-color:#ececec"></div>
  <div class="abs" style="left:83.8px;top:907.5px;font-size:18.8px;letter-spacing:0.1px;color:#111;white-space:nowrap">En Yakın Hastane</div>
  <div class="abs" style="left:61px;top:943.7px;width:1545.4px;height:300px;background:#fff;border-radius:0 16px 0 0"></div>
  <div class="abs" style="left:791px;top:1060px;width:84px;height:16px;border-radius:50%;background:#f2f2f2"></div>
  <svg class="abs" style="left:801px;top:1022px" width="64" height="50" viewBox="0 0 64 50"><path d="M2 18L12 1.5h40L62 18v29a2 2 0 0 1-2 2H4a2 2 0 0 1-2-2z" fill="#fafafa" stroke="#d9d9d9" stroke-width="1.2"/><path d="M2 18h16a3 3 0 0 1 3 3v2a3 3 0 0 0 3 3h16a3 3 0 0 0 3-3v-2a3 3 0 0 1 3-3h16" fill="#fafafa" stroke="#d9d9d9" stroke-width="1.2"/></svg>
  
  <div class="abs" style="left:0;top:1065px;width:1677px;height:55px;background:linear-gradient(180deg,rgba(0,0,0,0) 0%,rgba(0,0,0,0.02) 40%,rgba(0,0,0,0.065) 100%)"></div>
  <div class="abs" style="left:800px;top:1092px;font-size:18.8px;color:#3a3a3a;white-space:nowrap">Veri Yok</div>
  <!-- scrollbar -->
  <div class="abs" style="left:1666.3px;top:172px;width:10.7px;height:744px;background:#3a8a80;box-shadow:inset 1px 0 0 #4aa5a0,inset -1px 0 0 #5aa8b0"></div>
  <div class="abs" style="left:1666.3px;top:916px;width:10.7px;height:204px;background:#ebebeb"></div>
</div>
</body></html>
